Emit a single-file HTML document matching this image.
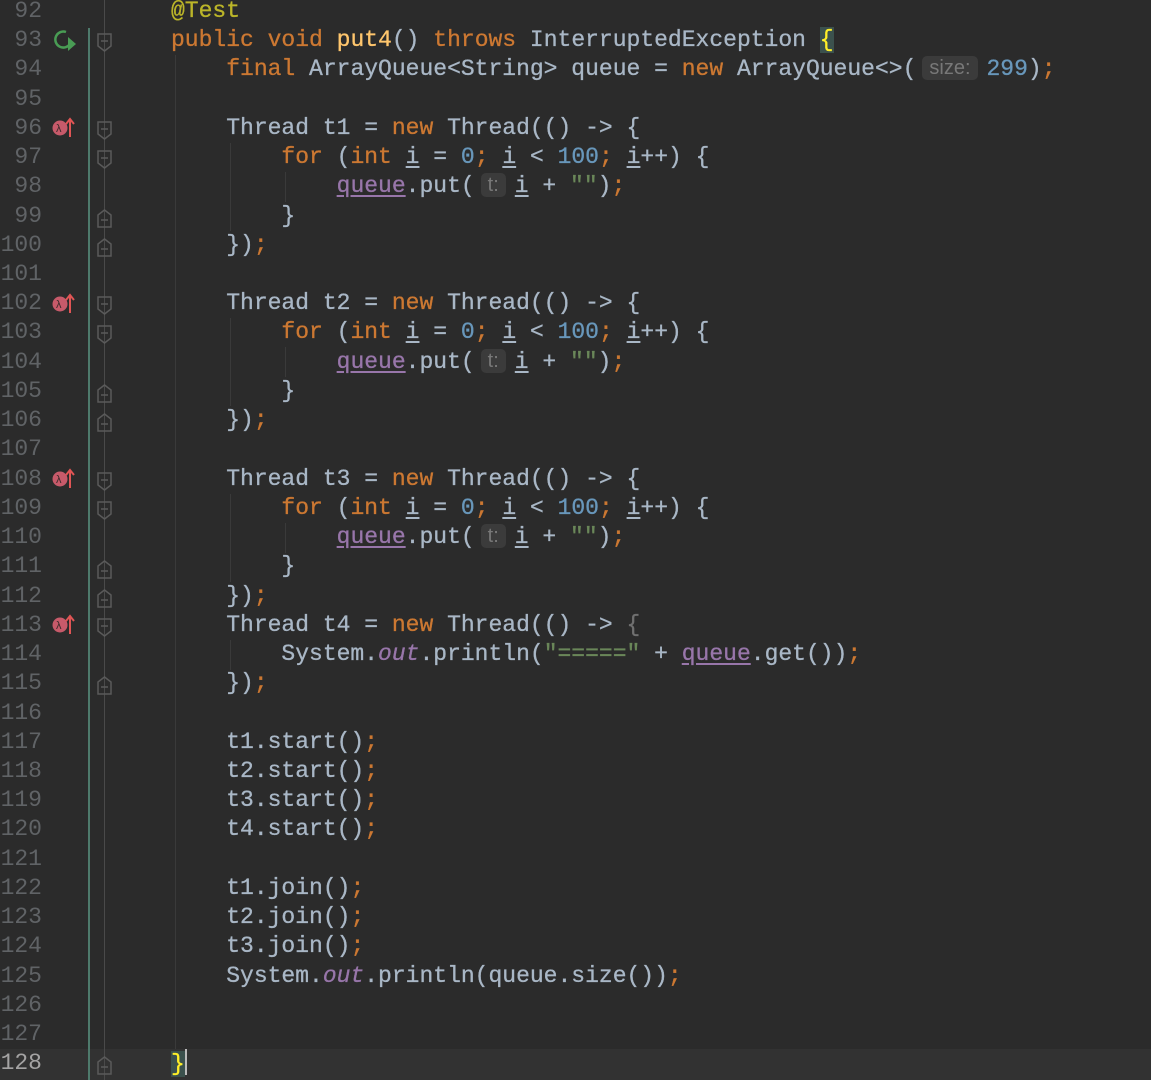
<!DOCTYPE html>
<html><head><meta charset="utf-8"><style>
html,body{margin:0;padding:0;width:1151px;height:1080px;background:#2b2b2b;overflow:hidden;position:relative}
.ln{position:absolute;left:0;width:42px;text-align:right;color:#606366;font:23px/29px "Liberation Mono",monospace}
.c{position:absolute;left:171px;white-space:pre;color:#a9b7c6;font:23px/29px "Liberation Mono",monospace;-webkit-text-stroke:0.3px currentColor}
.k{color:#cc7832}.a{color:#bbb529}.n{color:#6897bb}.s{color:#6a8759}.f{color:#9876aa}.fi{color:#9876aa;font-style:italic}
.u{text-decoration:underline;text-underline-offset:3px}
.h{display:inline-block;background:#3b3b3b;color:#787878;border-radius:5px;font:20px/24px "Liberation Sans",sans-serif;padding:0 7px;margin:0 9px 0 6px;vertical-align:1px;-webkit-text-stroke:0}
.vl{position:absolute;width:1px;background:#3a3a3a}
</style></head><body>
<div style="position:absolute;left:0;top:1049px;width:1151px;height:31px;background:#323232"></div>
<div style="position:absolute;left:88px;top:28px;width:2px;height:1052px;background:#4e7a6c"></div>
<div style="position:absolute;left:104px;top:0;width:1px;height:1080px;background:#4a4a4a"></div>
<div class="vl" style="left:175px;top:55px;height:994px"></div>
<div class="vl" style="left:230px;top:143px;height:88px"></div>
<div class="vl" style="left:230px;top:318px;height:88px"></div>
<div class="vl" style="left:230px;top:494px;height:88px"></div>
<div class="vl" style="left:230px;top:640px;height:30px"></div>
<div class="vl" style="left:285px;top:172px;height:30px"></div>
<div class="vl" style="left:285px;top:347px;height:30px"></div>
<div class="vl" style="left:285px;top:523px;height:30px"></div>

<svg style="position:absolute;left:0;top:0" width="170" height="1080">
<g fill="none" stroke="#5a5a5a" stroke-width="1.5">
<path d="M98,34h13v12l-6.5,5l-6.5,-5z M101,41h7"/>
<path d="M98,122h13v12l-6.5,5l-6.5,-5z M101,129h7"/>
<path d="M98,151h13v12l-6.5,5l-6.5,-5z M101,158h7"/>
<path d="M98,297h13v12l-6.5,5l-6.5,-5z M101,304h7"/>
<path d="M98,326h13v12l-6.5,5l-6.5,-5z M101,333h7"/>
<path d="M98,473h13v12l-6.5,5l-6.5,-5z M101,480h7"/>
<path d="M98,502h13v12l-6.5,5l-6.5,-5z M101,509h7"/>
<path d="M98,619h13v12l-6.5,5l-6.5,-5z M101,626h7"/>
<path d="M98,227v-12l6.5,-5l6.5,5v12z M101,220h7"/>
<path d="M98,256v-12l6.5,-5l6.5,5v12z M101,249h7"/>
<path d="M98,402v-12l6.5,-5l6.5,5v12z M101,395h7"/>
<path d="M98,431v-12l6.5,-5l6.5,5v12z M101,424h7"/>
<path d="M98,578v-12l6.5,-5l6.5,5v12z M101,571h7"/>
<path d="M98,607v-12l6.5,-5l6.5,5v12z M101,600h7"/>
<path d="M98,694v-12l6.5,-5l6.5,5v12z M101,687h7"/>
<path d="M98,1074v-12l6.5,-5l6.5,5v12z M101,1067h7"/>
</g>
<g>
<path d="M70,44a8,8 0 1 1 -4,-12" fill="none" stroke="#499c54" stroke-width="2.5"/>
<path d="M68,37l8,7l-8,7z" fill="#499c54"/>
</g>
<g id="lam">
<circle cx="60" cy="128" r="7.5" fill="#c75a6a"/>
<text x="56" y="132" font-size="11" fill="#3a2a2a" font-family="Liberation Sans,sans-serif">λ</text>
<path d="M70,137v-17M66,124l4,-5l4,5" stroke="#e05555" stroke-width="2" fill="none"/>
</g>
<use href="#lam" y="176"/><use href="#lam" y="351"/><use href="#lam" y="497"/>
</svg>

<div class="ln" style="top:-3px">92</div><div class="ln" style="top:26px">93</div><div class="ln" style="top:55px">94</div><div class="ln" style="top:85px">95</div><div class="ln" style="top:114px">96</div><div class="ln" style="top:143px">97</div><div class="ln" style="top:172px">98</div><div class="ln" style="top:202px">99</div><div class="ln" style="top:231px">100</div><div class="ln" style="top:260px">101</div><div class="ln" style="top:289px">102</div><div class="ln" style="top:318px">103</div><div class="ln" style="top:348px">104</div><div class="ln" style="top:377px">105</div><div class="ln" style="top:406px">106</div><div class="ln" style="top:435px">107</div><div class="ln" style="top:465px">108</div><div class="ln" style="top:494px">109</div><div class="ln" style="top:523px">110</div><div class="ln" style="top:552px">111</div><div class="ln" style="top:582px">112</div><div class="ln" style="top:611px">113</div><div class="ln" style="top:640px">114</div><div class="ln" style="top:669px">115</div><div class="ln" style="top:699px">116</div><div class="ln" style="top:728px">117</div><div class="ln" style="top:757px">118</div><div class="ln" style="top:786px">119</div><div class="ln" style="top:815px">120</div><div class="ln" style="top:845px">121</div><div class="ln" style="top:874px">122</div><div class="ln" style="top:903px">123</div><div class="ln" style="top:932px">124</div><div class="ln" style="top:962px">125</div><div class="ln" style="top:991px">126</div><div class="ln" style="top:1020px">127</div><div class="ln" style="top:1049px;color:#a4a3a3">128</div>

<div class="c" style="top:-3px"><span class="a">@Test</span></div>
<div class="c" style="top:26px"><span class="k">public void </span><span style="color:#ffc66d">put4</span>() <span class="k">throws </span>InterruptedException <span style="color:#ffef28;background:#3b514d">{</span></div>
<div class="c" style="top:55px">    <span class="k">final </span>ArrayQueue&lt;String&gt; queue = <span class="k">new </span>ArrayQueue&lt;&gt;(<span class="h">size:</span><span class="n">299</span>)<span class="k">;</span></div>
<div class="c" style="top:114px">    Thread t1 = <span class="k">new </span>Thread(() -&gt; {</div>
<div class="c" style="top:143px">        <span class="k">for </span>(<span class="k">int </span><span class="u">i</span> = <span class="n">0</span><span class="k">; </span><span class="u">i</span> &lt; <span class="n">100</span><span class="k">; </span><span class="u">i</span>++) {</div>
<div class="c" style="top:172px">            <span class="f u">queue</span>.put(<span class="h">t:</span><span class="u">i</span> + <span class="s">""</span>)<span class="k">;</span></div>
<div class="c" style="top:202px">        }</div>
<div class="c" style="top:231px">    })<span class="k">;</span></div>
<div class="c" style="top:289px">    Thread t2 = <span class="k">new </span>Thread(() -&gt; {</div>
<div class="c" style="top:318px">        <span class="k">for </span>(<span class="k">int </span><span class="u">i</span> = <span class="n">0</span><span class="k">; </span><span class="u">i</span> &lt; <span class="n">100</span><span class="k">; </span><span class="u">i</span>++) {</div>
<div class="c" style="top:348px">            <span class="f u">queue</span>.put(<span class="h">t:</span><span class="u">i</span> + <span class="s">""</span>)<span class="k">;</span></div>
<div class="c" style="top:377px">        }</div>
<div class="c" style="top:406px">    })<span class="k">;</span></div>
<div class="c" style="top:465px">    Thread t3 = <span class="k">new </span>Thread(() -&gt; {</div>
<div class="c" style="top:494px">        <span class="k">for </span>(<span class="k">int </span><span class="u">i</span> = <span class="n">0</span><span class="k">; </span><span class="u">i</span> &lt; <span class="n">100</span><span class="k">; </span><span class="u">i</span>++) {</div>
<div class="c" style="top:523px">            <span class="f u">queue</span>.put(<span class="h">t:</span><span class="u">i</span> + <span class="s">""</span>)<span class="k">;</span></div>
<div class="c" style="top:552px">        }</div>
<div class="c" style="top:582px">    })<span class="k">;</span></div>
<div class="c" style="top:611px">    Thread t4 = <span class="k">new </span>Thread(() -&gt; <span style="color:#707070">{</span></div>
<div class="c" style="top:640px">        System.<span class="fi">out</span>.println(<span class="s">"====="</span> + <span class="f u">queue</span>.get())<span class="k">;</span></div>
<div class="c" style="top:669px">    })<span class="k">;</span></div>
<div class="c" style="top:728px">    t1.start()<span class="k">;</span></div>
<div class="c" style="top:757px">    t2.start()<span class="k">;</span></div>
<div class="c" style="top:786px">    t3.start()<span class="k">;</span></div>
<div class="c" style="top:815px">    t4.start()<span class="k">;</span></div>
<div class="c" style="top:874px">    t1.join()<span class="k">;</span></div>
<div class="c" style="top:903px">    t2.join()<span class="k">;</span></div>
<div class="c" style="top:932px">    t3.join()<span class="k">;</span></div>
<div class="c" style="top:962px">    System.<span class="fi">out</span>.println(queue.size())<span class="k">;</span></div>
<div class="c" style="top:1049px"><span style="color:#ffef28;background:#3b514d">}</span><span style="display:inline-block;width:2px;height:26px;background:#bbb;vertical-align:-5px"></span></div>
</body></html>
